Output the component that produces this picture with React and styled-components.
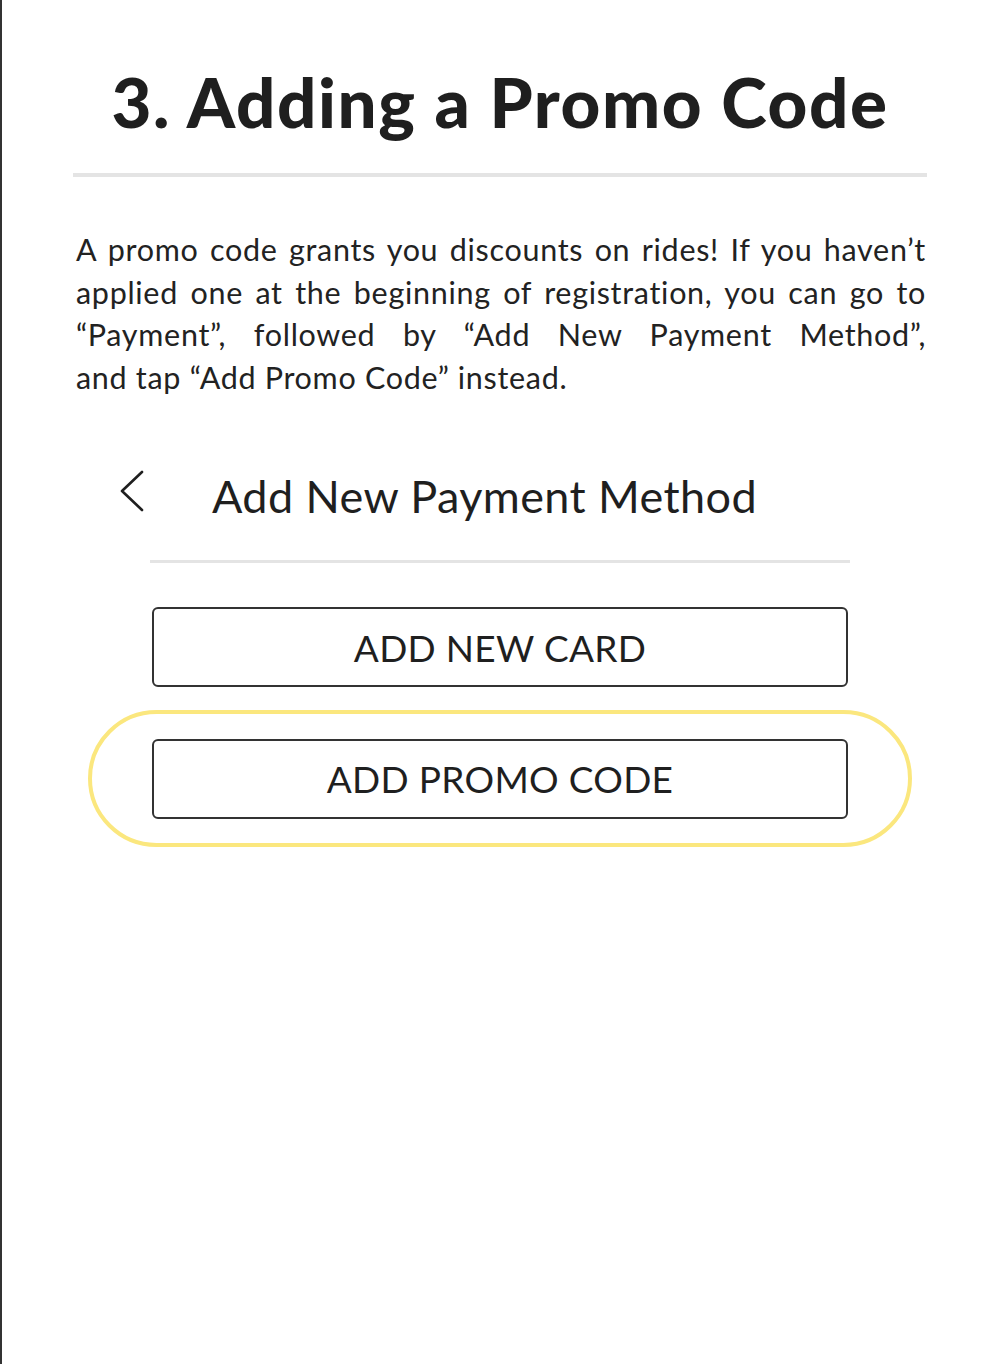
import styled, { createGlobalStyle } from "styled-components";

const GlobalStyle = createGlobalStyle`
  html, body {
    margin: 0;
    padding: 0;
    background: #fff;
  }
  body {
    font-family: Lato, "Noto Sans", sans-serif;
    color: #222;
  }
`;

const Page = styled.div`
  width: 998px;
  min-height: 1364px;
  box-sizing: border-box;
  border-left: 2px solid #333;
  display: flex;
  flex-direction: column;
  align-items: center;
`;

const Title = styled.h1`
  margin: 62px 0 0;
  font-size: 69px;
  font-weight: 900;
  line-height: 80px;
  letter-spacing: 1.6px;
  color: #1f1f1f;
  text-align: center;
`;

const Rule = styled.div`
  width: ${(p) => p.width}px;
  height: ${(p) => p.thick}px;
  background: #e4e4e4;
  margin-top: ${(p) => p.top}px;
`;

const Text = styled.div`
  width: 850px;
  margin: 51px 0 0 2px;
  font-size: 30.5px;
  line-height: 42.6px;
  letter-spacing: 0.7px;
  color: #222;
`;

const Line = styled.span`
  display: block;
  text-align: justify;
  text-align-last: ${(p) => (p.last ? "left" : "justify")};
`;

const Header = styled.div`
  width: 700px;
  display: flex;
  align-items: center;
  margin-top: 70px;
  height: 56px;
`;

const Back = styled.svg`
  width: 30px;
  height: 44px;
  margin-left: -34px;
  margin-top: -10px;
  flex-shrink: 0;
`;

const HeaderTitle = styled.div`
  margin-left: 66px;
  font-size: 45px;
  color: #1f1f1f;
  letter-spacing: 0.4px;
`;

const Button = styled.div`
  width: 696px;
  height: 80px;
  box-sizing: border-box;
  border: 2px solid #333;
  border-radius: 6px;
  display: flex;
  align-items: center;
  justify-content: center;
  font-size: 37px;
  color: #1f1f1f;
  letter-spacing: 0.3px;
  margin-top: ${(p) => p.top || 0}px;
`;

const Highlight = styled.div`
  width: 824px;
  height: 137px;
  box-sizing: border-box;
  border: 4px solid #fbe77e;
  border-radius: 70px;
  display: flex;
  align-items: center;
  justify-content: center;
  margin-top: 23px;
`;

const lines = [
  "A promo code grants you discounts on rides! If you haven’t",
  "applied one at the beginning of registration, you can go to",
  "“Payment”, followed by “Add New Payment Method”,",
  "and tap “Add Promo Code” instead.",
];

export default function App() {
  return (
    <>
      <GlobalStyle />
      <Page>
        <Title>3. Adding a Promo Code</Title>
        <Rule width={854} thick={4} top={31} />
        <Text>
          {lines.map((l, i) => (
            <Line key={i} last={i === lines.length - 1}>
              {l}
            </Line>
          ))}
        </Text>
        <Header>
          <Back viewBox="0 0 30 44">
            <path
              d="M26 3 L6 22 L26 41"
              fill="none"
              stroke="#1f1f1f"
              strokeWidth="2.6"
              strokeLinecap="round"
              strokeLinejoin="round"
            />
          </Back>
          <HeaderTitle>Add New Payment Method</HeaderTitle>
        </Header>
        <Rule width={700} thick={3} top={36} />
        <Button top={44}>ADD NEW CARD</Button>
        <Highlight>
          <Button>ADD PROMO CODE</Button>
        </Highlight>
      </Page>
    </>
  );
}
